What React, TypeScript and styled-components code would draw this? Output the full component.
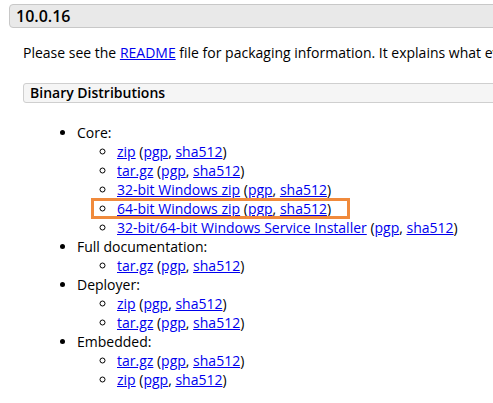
import React from "react";
import styled, { createGlobalStyle } from "styled-components";

const Global = createGlobalStyle`
  html, body { margin: 0; padding: 0; background: #fff; }
  body {
    font-family: "Open Sans", "DejaVu Sans", sans-serif;
    font-size: 14px;
    color: #000;
    overflow: hidden;
    width: 493px;
    height: 403px;
  }
`;

const Page = styled.div`
  padding: 4px 0 0 9px;
  width: 600px;
`;

const VersionHeader = styled.h3`
  margin: 0;
  height: 24px;
  box-sizing: border-box;
  padding: 0 0 0 6px;
  background: #e9e9e9;
  border: 1px solid #c8c8c8;
  border-radius: 4px;
  font-size: 16px;
  font-weight: 600;
  line-height: 22px;
  color: #000;
`;

const Section = styled.div`
  padding-left: 14px;
`;

const Para = styled.p`
  margin: 15px 0 0 0;
  line-height: 20px;
  white-space: nowrap;
`;

const SubHeader = styled.h4`
  margin: 20px 0 0 0;
  height: 20px;
  box-sizing: border-box;
  padding: 0 0 0 6px;
  background: #f5f5f5;
  border: 1px solid #cfcfcf;
  border-radius: 3px;
  font-size: 14px;
  font-weight: 600;
  line-height: 18px;
`;

const TopList = styled.ul`
  margin: 20px 0 0 0;
  padding: 0 0 0 54px;
  list-style: disc;
  line-height: 19px;
`;

const SubList = styled.ul`
  margin: 0;
  padding: 0 0 0 40px;
  list-style: circle;
`;

const Item = styled.li<{ $highlight?: boolean }>`
  white-space: nowrap;
  position: relative;
  ${(p) =>
    p.$highlight
      ? `
  &::after {
    content: "";
    position: absolute;
    left: -26px;
    top: -1px;
    width: 259px;
    height: 21px;
    box-sizing: border-box;
    border: 3px solid #f08a3c;
    pointer-events: none;
  }`
      : ""}
`;

const Link = styled.a`
  color: #0000ee;
  text-decoration: underline;
`;

type Entry = { label: string; highlight?: boolean };

const Download = ({ e }: { e: Entry }) => (
  <Item $highlight={e.highlight}>
    <Link href="#">{e.label}</Link> (<Link href="#">pgp</Link>,{" "}
    <Link href="#">sha512</Link>)
  </Item>
);

const groups: { name: string; items: Entry[] }[] = [
  {
    name: "Core:",
    items: [
      { label: "zip" },
      { label: "tar.gz" },
      { label: "32-bit Windows zip" },
      { label: "64-bit Windows zip", highlight: true },
      { label: "32-bit/64-bit Windows Service Installer" },
    ],
  },
  { name: "Full documentation:", items: [{ label: "tar.gz" }] },
  { name: "Deployer:", items: [{ label: "zip" }, { label: "tar.gz" }] },
  { name: "Embedded:", items: [{ label: "tar.gz" }, { label: "zip" }] },
];

export default function App() {
  return (
    <>
      <Global />
      <Page>
        <VersionHeader>10.0.16</VersionHeader>
        <Section>
          <Para>
            Please see the <Link href="#">README</Link> file for packaging
            information. It explains what every distribution contains.
          </Para>
          <SubHeader>Binary Distributions</SubHeader>
          <TopList>
            {groups.map((g) => (
              <li key={g.name}>
                {g.name}
                <SubList>
                  {g.items.map((e, i) => (
                    <Download key={i} e={e} />
                  ))}
                </SubList>
              </li>
            ))}
          </TopList>
        </Section>
      </Page>
    </>
  );
}
